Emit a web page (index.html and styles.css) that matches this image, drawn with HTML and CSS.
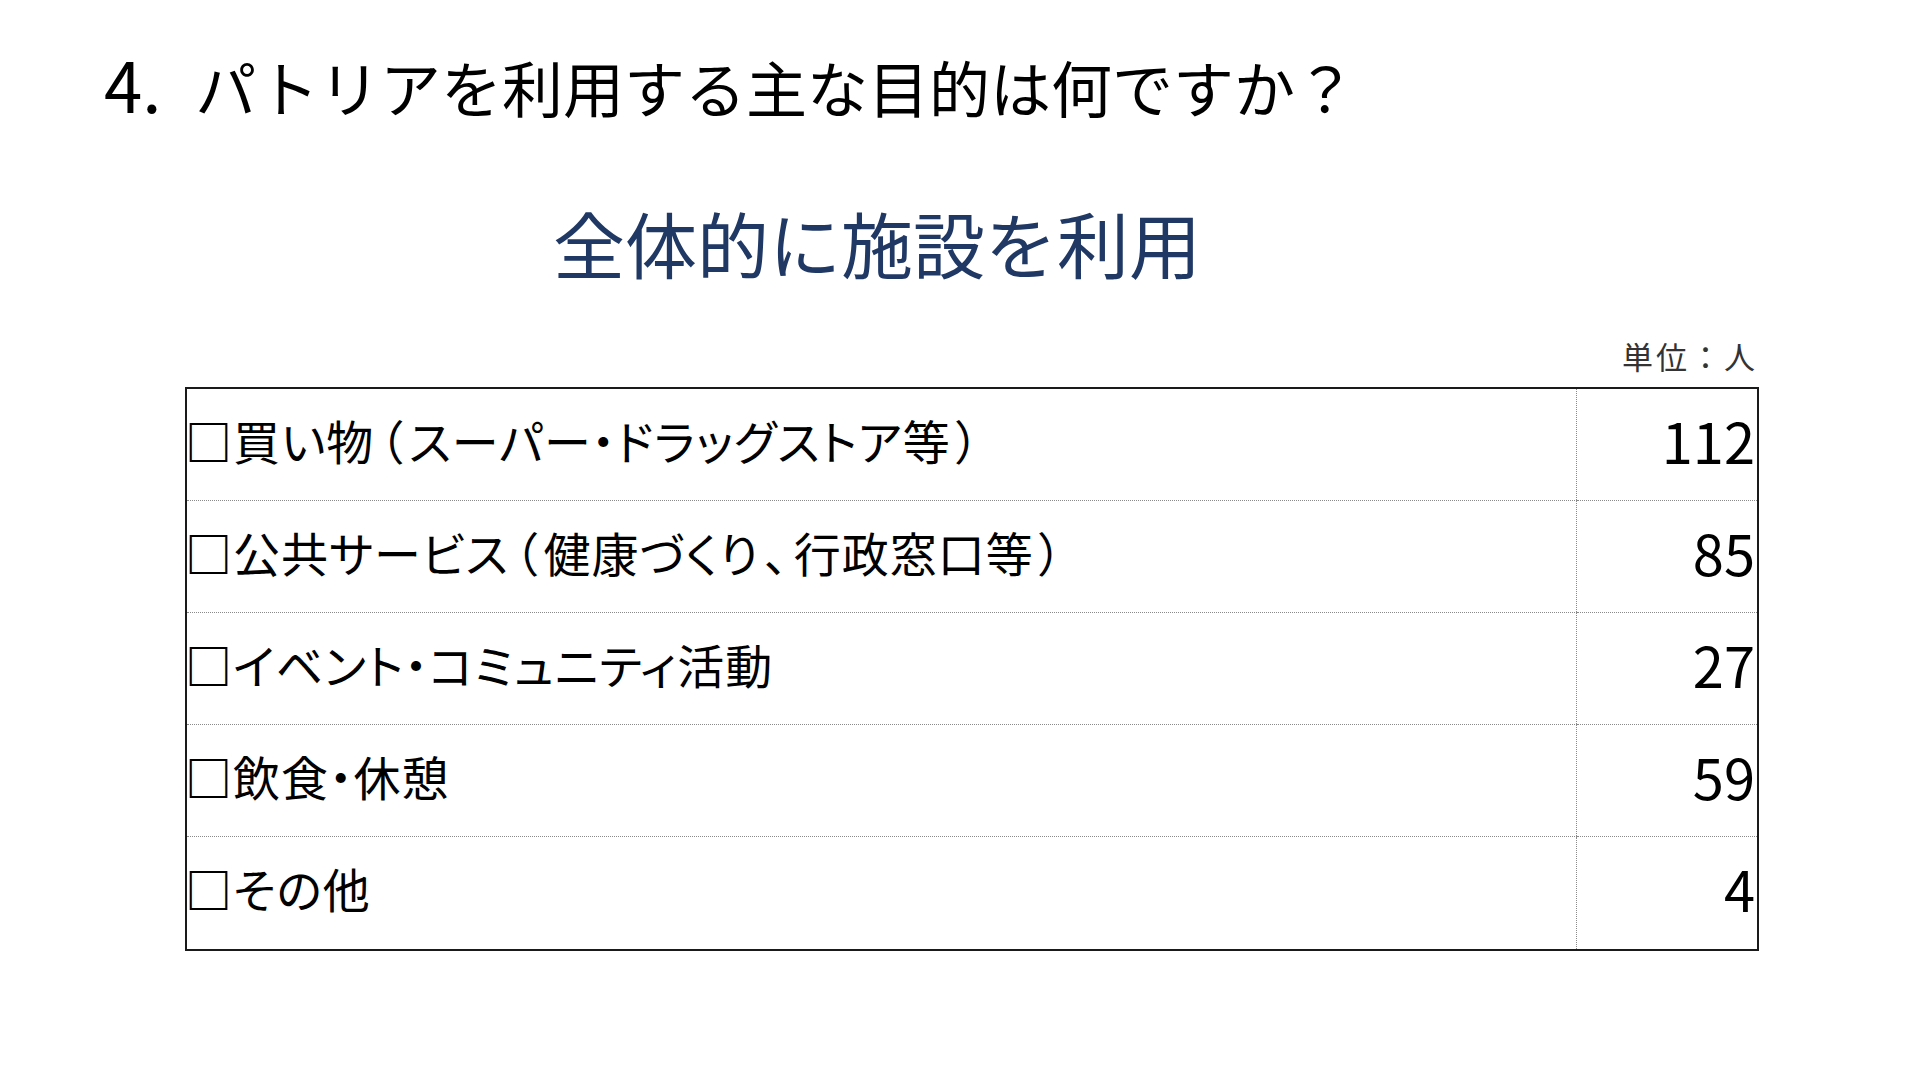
FILE: index.html
```html
<!DOCTYPE html>
<html lang="ja">
<head>
<meta charset="utf-8">
<title>4. パトリアを利用する主な目的は何ですか？</title>
<link rel="stylesheet" href="styles.css">
</head>
<body>
<main class="page">
  <h1 class="question"><span class="qno">4.</span> パトリアを利用する主な目的は何ですか？</h1>
  <h2 class="subtitle">全体的に施設を利用</h2>
  <div class="unit">単位：人</div>
  <table class="result">
    <tbody>
      <tr><td class="label"><span class="box">□</span>買い物<span class="p">（</span>スーパー・ドラッグストア等<span class="p">）</span></td><td class="num">112</td></tr>
      <tr><td class="label"><span class="box">□</span>公共サービス<span class="p">（</span>健康づくり<span class="p">、</span>行政窓口等<span class="p">）</span></td><td class="num">85</td></tr>
      <tr><td class="label"><span class="box">□</span>イベント・コミュニティ活動</td><td class="num">27</td></tr>
      <tr><td class="label"><span class="box">□</span>飲食・休憩</td><td class="num">59</td></tr>
      <tr class="last"><td class="label"><span class="box">□</span>その他</td><td class="num">4</td></tr>
    </tbody>
  </table>
</main>
</body>
</html>
```
FILE: styles.css
```css
html, body {
  margin: 0;
  padding: 0;
  background: #ffffff;
}
body {
  font-family: "Noto Sans CJK JP", "Noto Sans", sans-serif;
  color: #000;
}
.page {
  width: 1920px;
  height: 1080px;
  box-sizing: border-box;
  padding-top: 47px;
  display: flex;
  flex-direction: column;
}
.question {
  margin: 0 0 0 104px;
  font-size: 61px;
  font-weight: 400;
  line-height: 72px;
  height: 72px;
  word-spacing: 20px;
}
.qno {
  font-size: 69px;
}
.subtitle {
  margin: 80px 0 0 553px;
  font-size: 72px;
  font-weight: 400;
  line-height: 86px;
  height: 86px;
  color: #203864;
}
.unit {
  margin: 54px 0 0 0;
  width: 1758px;
  text-align: right;
  font-size: 31px;
  letter-spacing: 3px;
  line-height: 34px;
  height: 34px;
  color: #333;
}
.result {
  margin: 14px 0 0 185px;
  width: 1574px;
  border-collapse: collapse;
  border: 2px solid #1a1a1a;
}
.result tr {
  height: 112px;
}
.result tr.last {
  height: 114px;
}
.result td {
  padding: 0 0 10px 0;
  vertical-align: middle;
  border-bottom: 1px dotted #8a8a8a;
}
.result tr.last td {
  border-bottom: none;
}
.label {
  font-size: 47px;
  font-feature-settings: "palt";
  letter-spacing: 1px;
  white-space: nowrap;
}
.p {
  margin: 0 5px;
}
.box {
  font-weight: 700;
  margin-left: -2px;
}
.num {
  width: 178px;
  border-left: 1px dotted #8a8a8a;
  text-align: right;
  font-size: 56px;
  padding-right: 2px !important;
}
```
